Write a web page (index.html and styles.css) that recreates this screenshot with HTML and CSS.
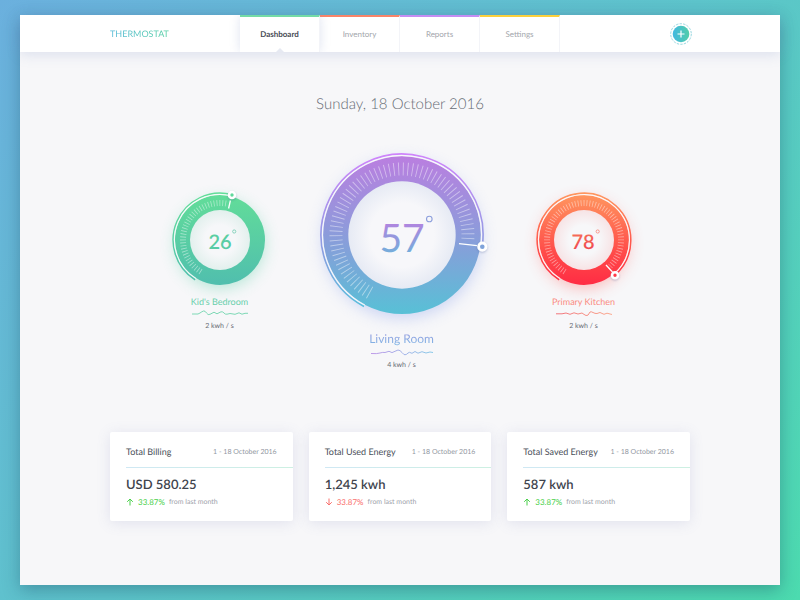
FILE: index.html
```
<!DOCTYPE html>
<html lang="en">

<head>
    <meta charset="UTF-8">
    <meta name="viewport" content="width=device-width, initial-scale=1.0">
    <title>Thermostat</title>
    <link rel="stylesheet" href="styles.css">
</head>

<body>
    <div class="app">
        <header class="header">
            <a href="#" class="logo">THERMOSTAT</a>
            <nav class="tabs">
                <a href="#" class="tab tab-green active">Dashboard</a>
                <a href="#" class="tab tab-red">Inventory</a>
                <a href="#" class="tab tab-purple">Reports</a>
                <a href="#" class="tab tab-yellow">Settings</a>
            </nav>
            <button class="add" aria-label="Add device">
                <svg viewBox="0 0 22 22" width="22" height="22">
                    <defs>
                        <linearGradient id="addFill">
                            <stop offset="0" stop-color="#41b8e0" />
                            <stop offset="1" stop-color="#52cda9" />
                        </linearGradient>
                    </defs>
                    <circle cx="11" cy="11" r="10.3" fill="none" stroke="#8cd3dc" stroke-width=".9" stroke-dasharray="2.4 1.2" />
                    <circle cx="11" cy="11" r="8.3" fill="url(#addFill)" />
                    <path d="M11 7.5v7M7.5 11h7" stroke="#fff" stroke-width="1.2" />
                </svg>
            </button>
        </header>

        <main class="content">
            <h1 class="date">Sunday, 18 October 2016</h1>

            <section class="dials">
                <div class="dial dial-small">
                    <svg class="ring" viewBox="-60 -55 120 110" width="120" height="110">
                        <defs>
                            <linearGradient id="green" gradientUnits="userSpaceOnUse" x1="0" y1="-46" x2="0" y2="46">
                                <stop offset="0" stop-color="#62dd99" />
                                <stop offset="1" stop-color="#50beae" />
                            </linearGradient>
                            <radialGradient id="greenHole">
                                <stop offset=".5" stop-color="#f6f7f9" />
                                <stop offset="1" stop-color="#e2f0ed" />
                            </radialGradient>
                        </defs>
                        <circle class="shadow" r="44" fill="#5fd0a8" />
                        <circle r="45" fill="url(#green)" />
                        <circle r="30" fill="url(#greenHole)" />
                        <path class="arc" stroke="url(#green)" d="M-24.8 39.7A46.8 46.8 0 0 1 12.1 -45.2" />
                        <path class="arc light" d="M-24.1 38.5A45.4 45.4 0 0 1 11.8 -43.9" />
                        <path class="ticks ticks-small" pathLength="160.5" d="M-19.1 31.7A37 37 0 0 1 7.1 -36.3" />
                        <path class="needle" d="M8.6 -31.5L10.4 -39.5" />
                        <circle class="knob" cx="12" cy="-45" r="3" fill="#5fd99c" stroke="#fff" stroke-width="2.6" />
                        <text class="temp-small" y="9" fill="url(#green)">26</text>
                        <circle cx="14.2" cy="-8.5" r="1.6" fill="none" stroke="#62c6a8" stroke-width=".7" />
                    </svg>
                    <h2 class="room text-green">Kid's Bedroom</h2>
                    <svg class="wave" viewBox="0 0 56 8" width="56" height="8">
                        <path stroke="#6fd5ae" d="M0 5H4Q6 5.5 8 4T11.5 2Q13 1.5 14.5 4T18 5.3L22 3.2 25 4.8 29 2.8Q31 2.5 32 4T35 5.2L38 4.5 43 5.3 47 3.8 50 5.2 53 4.3H56" />
                    </svg>
                    <p class="usage">2 kwh / s</p>
                </div>

                <div class="dial">
                    <svg class="ring" viewBox="-100 -95 200 190" width="200" height="190">
                        <defs>
                            <linearGradient id="violet" gradientUnits="userSpaceOnUse" x1="0" y1="-80" x2="0" y2="80">
                                <stop offset="0" stop-color="#bb7ee0" />
                                <stop offset=".62" stop-color="#80a3d9" />
                                <stop offset="1" stop-color="#57c1d6" />
                            </linearGradient>
                            <linearGradient id="violetArc" gradientUnits="userSpaceOnUse" x1="0" y1="-80" x2="0" y2="80">
                                <stop offset="0" stop-color="#cf85fb" />
                                <stop offset=".6" stop-color="#8b9ee0" />
                                <stop offset="1" stop-color="#52c4dc" />
                            </linearGradient>
                            <linearGradient id="violetText" gradientUnits="userSpaceOnUse" x1="0" y1="-12" x2="0" y2="20">
                                <stop offset="0" stop-color="#b184df" />
                                <stop offset="1" stop-color="#6fb1db" />
                            </linearGradient>
                            <radialGradient id="violetHole">
                                <stop offset=".6" stop-color="#f7f7fa" />
                                <stop offset="1" stop-color="#e6eaf4" />
                            </radialGradient>
                        </defs>
                        <circle class="shadow" r="79" fill="#93a8ec" />
                        <circle r="79" fill="url(#violet)" />
                        <circle r="53.7" fill="url(#violetHole)" />
                        <path class="arc" stroke="url(#violetArc)" d="M-38 71.5A81 81 0 1 1 80.2 11.7" />
                        <path class="arc light" d="M-37.2 70A79.3 79.3 0 1 1 78.5 11.4" />
                        <path class="ticks ticks-big" pathLength="245.5" d="M-32 57.7A66 66 0 1 1 65.8 4.6" />
                        <path class="needle" d="M57 8.7L75 10.6" />
                        <circle class="knob" cx="80.3" cy="11.7" r="3.7" fill="#7fa3da" stroke="#fff" stroke-width="2.8" />
                        <text class="temp-big" y="17" fill="url(#violetText)">57</text>
                        <circle cx="27.3" cy="-16" r="2.8" fill="none" stroke="#8d9fdc" stroke-width="1.1" />
                    </svg>
                    <h2 class="room room-big text-violet">Living Room</h2>
                    <svg class="wave" viewBox="0 0 62 8" width="62" height="8">
                        <defs>
                            <linearGradient id="waveViolet" gradientUnits="userSpaceOnUse" x1="0" y1="0" x2="62" y2="0">
                                <stop offset="0" stop-color="#b98fe6" />
                                <stop offset="1" stop-color="#7cc4e6" />
                            </linearGradient>
                        </defs>
                        <path stroke="url(#waveViolet)" d="M0 5.5Q6 6 9 5T14 4.5L18 3.3 21 4.6 27 2Q29 2 31 4.5T34 6.8Q36 6.5 37 5T41 5.3L44 3.5 47 5.2 51 3.7 55 5 59 4 62 4.5" />
                    </svg>
                    <p class="usage">4 kwh / s</p>
                </div>

                <div class="dial dial-small">
                    <svg class="ring" viewBox="-60 -55 120 110" width="120" height="110">
                        <defs>
                            <linearGradient id="red" gradientUnits="userSpaceOnUse" x1="0" y1="-46" x2="0" y2="46">
                                <stop offset="0" stop-color="#ff965f" />
                                <stop offset=".65" stop-color="#ff4a49" />
                                <stop offset="1" stop-color="#ff2b44" />
                            </linearGradient>
                            <linearGradient id="redText" gradientUnits="userSpaceOnUse" x1="0" y1="-12" x2="0" y2="12">
                                <stop offset="0" stop-color="#f9795b" />
                                <stop offset="1" stop-color="#ee4550" />
                            </linearGradient>
                            <radialGradient id="redHole">
                                <stop offset=".5" stop-color="#f7f7f9" />
                                <stop offset="1" stop-color="#f7e3e5" />
                            </radialGradient>
                        </defs>
                        <circle class="shadow" r="44" fill="#ff6a66" />
                        <circle r="45" fill="url(#red)" />
                        <circle r="30" fill="url(#redHole)" />
                        <path class="arc" stroke="url(#red)" d="M-24.8 39.7A46.8 46.8 0 1 1 30.9 35.1" />
                        <path class="arc light" d="M-24.1 38.5A45.4 45.4 0 1 1 30 34.1" />
                        <path class="ticks ticks-small" pathLength="284.5" d="M-19.1 31.7A37 37 0 1 1 26.2 26.2" />
                        <path class="needle" d="M22 25L28.5 32" />
                        <circle class="knob" cx="31" cy="35.2" r="3" fill="#ff3a48" stroke="#fff" stroke-width="2.6" />
                        <text class="temp-small" x="-1" y="9" fill="url(#redText)">78</text>
                        <circle cx="13.7" cy="-8.5" r="1.6" fill="none" stroke="#f77868" stroke-width=".7" />
                    </svg>
                    <h2 class="room text-red">Primary Kitchen</h2>
                    <svg class="wave" viewBox="0 0 56 8" width="56" height="8">
                        <defs>
                            <linearGradient id="waveRed" gradientUnits="userSpaceOnUse" x1="0" y1="0" x2="56" y2="0">
                                <stop offset="0" stop-color="#f0646c" />
                                <stop offset="1" stop-color="#fba184" />
                            </linearGradient>
                        </defs>
                        <path stroke="url(#waveRed)" d="M0 4.8H6L10 4 14 5.3 18 3.8 22 5 26 4Q28 5.5 30 6.5T34 3Q35 2.3 37 3.5T41 4.5L44 3.5 48 5.3 51 4.2 56 5.5" />
                    </svg>
                    <p class="usage">2 kwh / s</p>
                </div>
            </section>

            <section class="cards">
                <article class="card">
                    <div class="card-head">
                        <h3>Total Billing</h3>
                        <span class="period">1 - 18 October 2016</span>
                    </div>
                    <p class="value">USD 580.25</p>
                    <p class="change up">
                        <svg viewBox="0 0 8 8" width="8" height="8"><path d="M4 7.5V1M1.2 3.8L4 1l2.8 2.8" /></svg>
                        <b>33.87%</b>
                        <span>from last month</span>
                    </p>
                </article>
                <article class="card">
                    <div class="card-head">
                        <h3>Total Used Energy</h3>
                        <span class="period">1 - 18 October 2016</span>
                    </div>
                    <p class="value">1,245 kwh</p>
                    <p class="change down">
                        <svg viewBox="0 0 8 8" width="8" height="8"><path d="M4 .5V7M1.2 4.2L4 7l2.8-2.8" /></svg>
                        <b>33.87%</b>
                        <span>from last month</span>
                    </p>
                </article>
                <article class="card">
                    <div class="card-head">
                        <h3>Total Saved Energy</h3>
                        <span class="period">1 - 18 October 2016</span>
                    </div>
                    <p class="value">587 kwh</p>
                    <p class="change up">
                        <svg viewBox="0 0 8 8" width="8" height="8"><path d="M4 7.5V1M1.2 3.8L4 1l2.8 2.8" /></svg>
                        <b>33.87%</b>
                        <span>from last month</span>
                    </p>
                </article>
            </section>
        </main>
    </div>
</body>

</html>
```
FILE: styles.css
```
* {
    box-sizing: border-box;
}

body,
h1,
h2,
h3,
p {
    margin: 0;
}

body {
    min-height: 100vh;
    padding: 15px 20px;
    display: flex;
    background: linear-gradient(135deg, #6bb0de 0%, #5dc4cb 50%, #4cdbaf 100%);
    font-family: Lato, "Open Sans", sans-serif;
    text-rendering: geometricPrecision;
    color: #4a4f59;
}

a {
    text-decoration: none;
}

.app {
    flex: 1;
    background: #f7f7f9;
    box-shadow: 0 5px 16px rgba(20, 60, 90, 0.35);
}

/* Header */
.header {
    position: relative;
    display: flex;
    align-items: center;
    height: 37px;
    padding: 0 88px 0 90px;
    background: #fff;
    box-shadow: 0 2px 14px rgba(110, 130, 190, 0.22);
}

.logo {
    width: 130px;
    font-size: 9px;
    background: linear-gradient(90deg, #55b9d8, #54cfa4 58px);
    -webkit-background-clip: text;
    background-clip: text;
    color: transparent;
}

.tabs {
    display: flex;
    align-self: stretch;
}

.tab {
    position: relative;
    width: 80px;
    border-top: 2px solid;
    border-right: 1px solid #f3f4f8;
    line-height: 35px;
    font-size: 8px;
    text-align: center;
    color: #a3a6ac;
}

.tab-green {
    border-top-color: #74dba6;
}

.tab-red {
    border-top-color: #f98468;
}

.tab-purple {
    border-top-color: #c48df3;
}

.tab-yellow {
    border-top-color: #fbd03c;
}

.tab.active {
    z-index: 1;
    background: #fff;
    color: #474b55;
    font-weight: bold;
    box-shadow: 0 0 10px rgba(110, 130, 190, 0.22);
    clip-path: inset(0 -12px);
}

/* Small notch under the open tab */
.tab.active::after {
    content: "";
    position: absolute;
    bottom: 0;
    left: 50%;
    margin-left: -4px;
    border: 4px solid transparent;
    border-top: 0;
    border-bottom: 4px solid #e6e9f2;
}

.add {
    display: flex;
    margin-left: auto;
    padding: 0;
    border: 0;
    background: none;
    cursor: pointer;
}

/* Content */
.content {
    max-width: 580px;
    margin: 0 auto;
    padding: 42px 0 60px;
}

.date {
    font-size: 15px;
    font-weight: 300;
    line-height: 20px;
    text-align: center;
    color: #666b74;
}

/* Dials */
.dials {
    display: flex;
    justify-content: center;
    gap: 22px;
    margin-top: 26px;
    padding-left: 3px;
}

.dial {
    display: flex;
    flex-direction: column;
    align-items: center;
}

.dial-small {
    margin-top: 45px;
}

.ring {
    overflow: visible;
}

.shadow {
    opacity: 0.45;
    filter: blur(8px);
    transform: translateY(4px);
}

.arc {
    fill: none;
    stroke-width: 1.6;
}

.light {
    stroke: #fff;
    stroke-opacity: 0.7;
    stroke-width: 1.2;
}

.knob {
    filter: drop-shadow(0 1px 1px rgba(60, 80, 140, 0.3));
}

.ticks {
    fill: none;
    stroke: #fff;
    stroke-opacity: 0.45;
}

.ticks-small {
    stroke-width: 6;
    stroke-dasharray: 1.3 3.2;
}

.ticks-big {
    stroke-width: 13;
    stroke-dasharray: 0.8 3.2;
}

.needle {
    stroke: #fff;
    stroke-width: 1.3;
}

.temp-small,
.temp-big {
    text-anchor: middle;
}

.temp-small {
    font-size: 20px;
    font-weight: 600;
}

.temp-big {
    font-size: 39px;
    font-weight: 400;
}

.room {
    font-size: 9px;
    font-weight: 400;
    line-height: 14px;
}

.room-big {
    font-size: 12px;
    line-height: 18px;
}

.text-green {
    color: #68cfab;
}

.text-violet {
    background: linear-gradient(#9a95de, #79bbe6);
    -webkit-background-clip: text;
    background-clip: text;
    color: transparent;
}

.text-red {
    color: #fa8b81;
}

.wave path {
    fill: none;
    stroke-width: 0.9;
    stroke-linejoin: round;
}

.usage {
    margin-top: 3px;
    font-size: 7px;
    line-height: 12px;
    color: #686c75;
}

/* Cards */
.cards {
    display: grid;
    grid-template-columns: repeat(3, 1fr);
    gap: 16px;
    margin-top: 61px;
}

.card {
    padding: 12px 0 13px 16px;
    border-radius: 2px;
    background: #fff;
    box-shadow: 0 2px 14px rgba(110, 120, 180, 0.16);
}

.card-head {
    display: flex;
    align-items: center;
    justify-content: space-between;
    height: 24px;
    padding: 0 16px 8px 0;
    border-bottom: 1px solid;
    border-image: linear-gradient(90deg, #cfe8f4, #cdf0e2) 1;
}

.card h3 {
    font-size: 9px;
    font-weight: 400;
}

.period {
    font-size: 7px;
    color: #92979f;
}

.value {
    margin-top: 8px;
    font-size: 13px;
    font-weight: 600;
    line-height: 16px;
    color: #40444d;
}

.change {
    display: flex;
    align-items: center;
    gap: 4px;
    margin-top: 4px;
    font-size: 7px;
    line-height: 12px;
}

.change b {
    font-size: 8px;
    font-weight: 400;
}

.change span {
    color: #9da1aa;
}

.change path {
    fill: none;
    stroke: currentColor;
}

.up {
    color: #49d04a;
}

.down {
    color: #f9706d;
}
```
